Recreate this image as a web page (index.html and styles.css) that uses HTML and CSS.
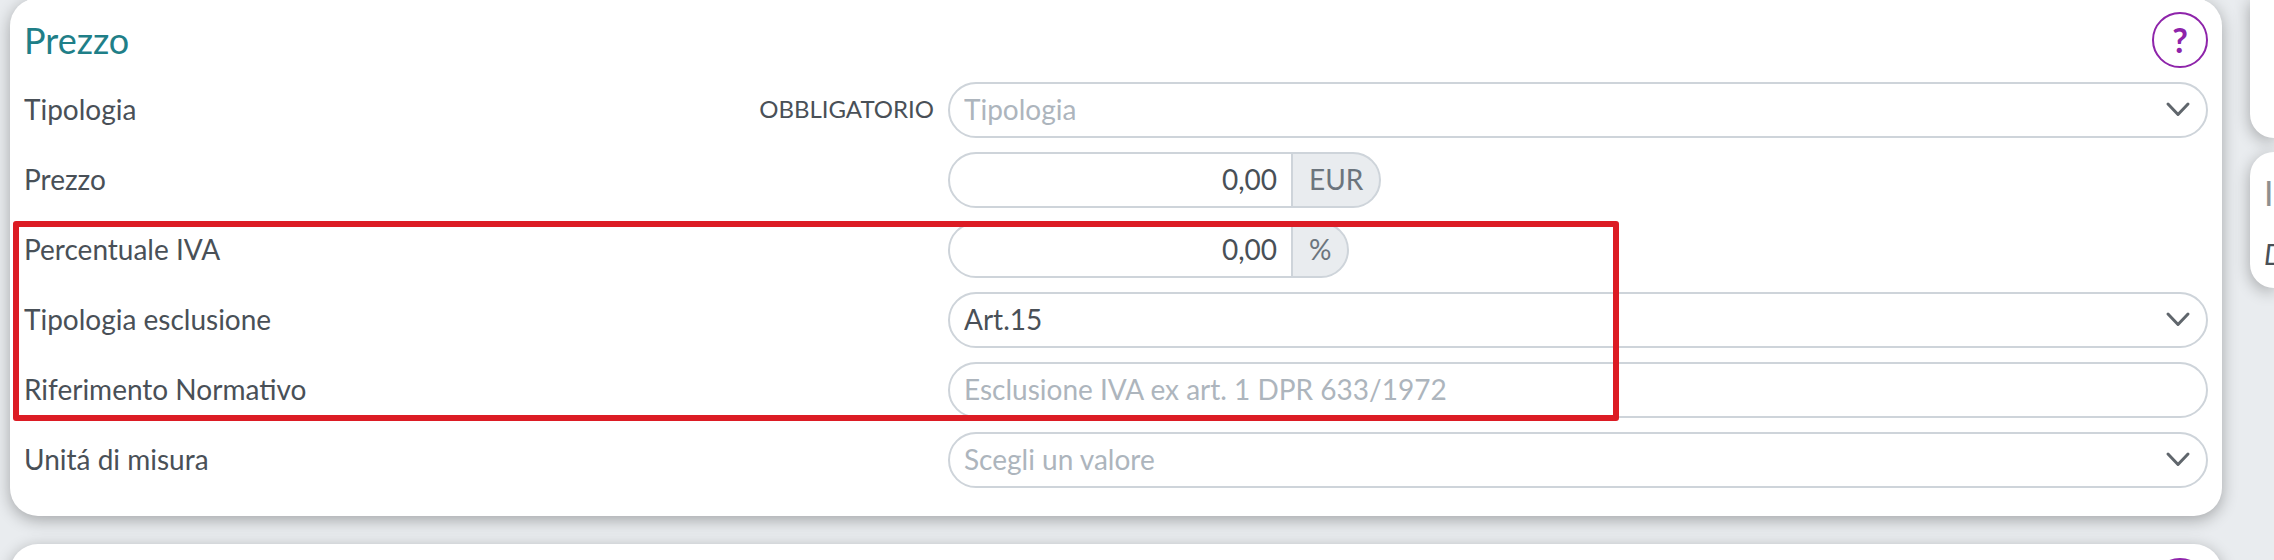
FILE: index.html
```html
<!DOCTYPE html>
<html lang="it">
<head>
	<meta charset="utf-8">
	<title>Prezzo</title>
	<link rel="stylesheet" href="styles.css">
</head>
<body>
	<div class="page">
		<main class="main">
			<form class="card">
				<div class="card-header">
					<h2 class="title">Prezzo</h2>
					<button type="button" class="help" aria-label="Aiuto">?</button>
				</div>
				<div class="row">
					<div class="row-label">
						<label for="tipologia">Tipologia</label>
						<span class="required">OBBLIGATORIO</span>
					</div>
					<div class="control">
						<select id="tipologia" class="field placeholder">
							<option>Tipologia</option>
						</select>
						<svg class="chevron" viewBox="0 0 28 20"><path d="M4 4l10 10.500 10-10.500"/></svg>
					</div>
				</div>
				<div class="row">
					<div class="row-label"><label for="prezzo">Prezzo</label></div>
					<div class="control">
						<input type="text" id="prezzo" class="field number" value="0,00">
						<span class="addon">EUR</span>
					</div>
				</div>
				<!-- rows about the VAT exclusion -->
				<div class="marked">
					<div class="row">
						<div class="row-label"><label for="iva">Percentuale IVA</label></div>
						<div class="control">
							<input type="text" id="iva" class="field number" value="0,00">
							<span class="addon">%</span>
						</div>
					</div>
					<div class="row">
						<div class="row-label"><label for="esclusione">Tipologia esclusione</label></div>
						<div class="control">
							<select id="esclusione" class="field">
								<option>Art.15</option>
							</select>
							<svg class="chevron" viewBox="0 0 28 20"><path d="M4 4l10 10.500 10-10.500"/></svg>
						</div>
					</div>
					<div class="row">
						<div class="row-label"><label for="riferimento">Riferimento Normativo</label></div>
						<div class="control">
							<input type="text" id="riferimento" class="field" placeholder="Esclusione IVA ex art. 1 DPR 633/1972">
						</div>
					</div>
				</div>
				<div class="row">
					<div class="row-label"><label for="misura">Unitá di misura</label></div>
					<div class="control">
						<select id="misura" class="field placeholder">
							<option>Scegli un valore</option>
						</select>
						<svg class="chevron" viewBox="0 0 28 20"><path d="M4 4l10 10.500 10-10.500"/></svg>
					</div>
				</div>
			</form>
			<section class="card">
				<div class="card-header">
					<button type="button" class="help" aria-label="Aiuto">?</button>
				</div>
			</section>
		</main>
		<aside class="side">
			<div class="side-card side-top"></div>
			<div class="side-card">
				<h3 class="side-title">I</h3>
				<em class="side-text">D</em>
			</div>
		</aside>
	</div>
</body>
</html>
```

FILE: styles.css
```css
*,
*::after {
	box-sizing: border-box;
}
body {
	margin: 0;
	height: 100vh;
	overflow: hidden;
	background-color: #e9ecef;
	color: #495057;
	font-family: Lato, "Open Sans", sans-serif;
	font-size: 28px;
	line-height: 40px;
}
.page {
	display: grid;
	grid-template-columns: 1fr 24px;
	gap: 28px;
	margin-top: -2px;
	padding-left: 10px;
}
.main {
	display: flex;
	flex-direction: column;
	gap: 28px;
}
.card {
	display: flex;
	flex-direction: column;
	gap: 14px;
	padding: 14px 14px 28px;
	border-radius: 28px;
	background-color: #fff;
	box-shadow: 0 4px 16px rgba(0, 0, 0, 0.3);
}
.card-header {
	display: flex;
	align-items: center;
}
.title {
	margin: 0;
	color: #1f7f88;
	font-size: 36px;
	font-weight: 400;
}
.help {
	width: 56px;
	height: 56px;
	margin-left: auto;
	padding: 0;
	border: 2px solid #8e24aa;
	border-radius: 50%;
	background-color: #fff;
	color: #8e24aa;
	font-family: inherit;
	font-size: 34px;
	font-weight: 700;
	line-height: 40px;
}
.row {
	display: grid;
	grid-template-columns: 5fr 7fr;
	align-items: center;
}
.row-label {
	display: flex;
	align-items: center;
	justify-content: space-between;
	padding-bottom: 2px;
}
.required {
	font-size: 24px;
}
.control {
	position: relative;
	display: flex;
	margin-left: 14px;
}
.field {
	width: 100%;
	height: 56px;
	padding: 0 14px 2px;
	border: 2px solid #ced4da;
	border-radius: 28px;
	background-color: #fff;
	color: #495057;
	font: inherit;
	appearance: none;
}
.field.placeholder,
.field::placeholder {
	color: #adb5bd;
	opacity: 1;
}
.chevron {
	position: absolute;
	top: 18px;
	right: 16px;
	width: 28px;
	height: 20px;
	fill: none;
	stroke: #60666c;
	stroke-width: 3;
	stroke-linecap: round;
	stroke-linejoin: round;
	pointer-events: none;
}
.number {
	width: 345px;
	border-radius: 28px 0 0 28px;
	text-align: right;
}
.addon {
	height: 56px;
	margin-left: -2px;
	padding: 5px 16px;
	border: 2px solid #ced4da;
	border-radius: 0 28px 28px 0;
	background-color: #e9ecef;
	color: #6c757d;
}
.marked {
	position: relative;
	display: flex;
	flex-direction: column;
	gap: 14px;
}
.marked::after {
	content: "";
	position: absolute;
	top: -1px;
	bottom: -3px;
	left: -11px;
	width: calc(73% + 12px);
	border: 6px solid #dc1c24;
	border-radius: 3px;
	pointer-events: none;
}
.side {
	display: flex;
	flex-direction: column;
	gap: 14px;
}
.side-card {
	height: 136px;
	padding: 21px 0 0 14px;
	border-radius: 28px 0 0 28px;
	background-color: #fff;
	box-shadow: 0 4px 16px rgba(0, 0, 0, 0.3);
}
.side-top {
	height: 140px;
	border-top-left-radius: 0;
}
.side-title {
	margin: 0 0 21px;
	color: #8f8f8f;
	font-size: 34px;
	font-weight: 400;
}
.side-text {
	display: block;
}
```
